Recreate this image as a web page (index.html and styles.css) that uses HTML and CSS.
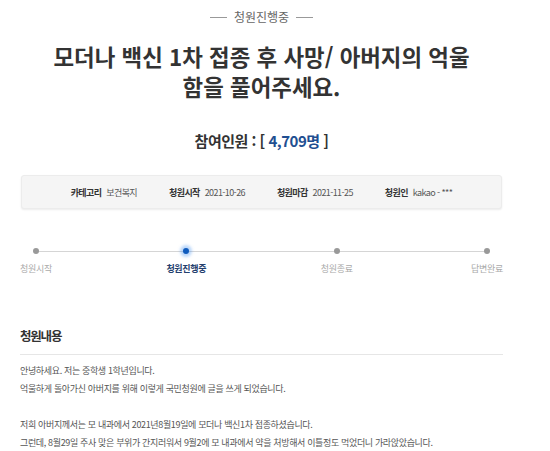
FILE: index.html
```html
<!DOCTYPE html>
<html lang="ko">
  <head>
    <meta charset="UTF-8" />
    <meta name="viewport" content="width=device-width, initial-scale=1.0" />
    <title>청원진행중</title>
    <link rel="stylesheet" href="styles.css">
  </head>
  <body>
    <div class="petition">
      <div class="status"><span class="dash"></span>청원진행중<span class="dash"></span></div>

      <h1 class="title">모더나 백신 1차 접종 후 사망/ 아버지의 억울<br />함을 풀어주세요.</h1>

      <h2 class="count">참여인원 : [ <span class="num">4,709명</span> ]</h2>

      <ul class="info">
        <li><strong>카테고리</strong> 보건복지</li>
        <li><strong>청원시작</strong> 2021-10-26</li>
        <li><strong>청원마감</strong> 2021-11-25</li>
        <li><strong>청원인</strong> kakao - ***</li>
      </ul>

      <div class="progress">
        <div class="step"><span class="dot"></span><span class="label">청원시작</span></div>
        <div class="step active"><span class="dot"></span><span class="label">청원진행중</span></div>
        <div class="step"><span class="dot"></span><span class="label">청원종료</span></div>
        <div class="step"><span class="dot"></span><span class="label">답변완료</span></div>
      </div>

      <div class="content">
        <h3>청원내용</h3>
        <p>
          안녕하세요. 저는 중학생 1학년입니다.<br />
          억울하게 돌아가신 아버지를 위해 이렇게 국민청원에 글을 쓰게 되었습니다.<br />
          <br />
          저희 아버지께서는 모 내과에서 2021년8월19일에 모더나 백신1차 접종하셨습니다.<br />
          그런데, 8월29일 주사 맞은 부위가 간지러워서 9월2에 모 내과에서 약을 처방해서 이틀정도 먹었더니 가라앉았습니다.
        </p>
      </div>
    </div>
  </body>
</html>
```

FILE: styles.css
```css
html,
body {
  margin: 0;
  padding: 0;
  background: #fff;
  font-family: "Noto Sans CJK KR", "Noto Sans", sans-serif;
  color: #333;
  overflow: hidden;
}

.petition {
  width: 483px;
  margin-left: 20px;
}

.status {
  display: flex;
  align-items: center;
  justify-content: center;
  gap: 7px;
  padding-top: 7px;
  line-height: 20px;
  font-size: 12px;
  color: #666;
}

.dash {
  width: 17px;
  height: 1px;
  background: #999;
}

.title {
  margin: 14px 0 0;
  font-size: 22.4px;
  line-height: 30px;
  font-weight: bold;
  text-align: center;
  color: #333;
}

.count {
  margin: 28px 0 0;
  font-size: 15px;
  line-height: 24px;
  letter-spacing: -0.5px;
  font-weight: bold;
  text-align: center;
}

.count .num {
  color: #1f4f91;
}

.info {
  list-style: none;
  display: flex;
  justify-content: center;
  gap: 32px;
  margin: 22px 1px 0;
  padding: 0;
  height: 34px;
  align-items: center;
  background: #f5f5f5;
  border: 1px solid #ececec;
  border-radius: 3px;
  box-shadow: 0 1px 2px rgba(0, 0, 0, 0.08);
  box-sizing: border-box;
  font-size: 9px;
  letter-spacing: -0.6px;
  color: #555;
}

.info strong {
  color: #333;
  margin-right: 3px;
}

.progress {
  position: relative;
  display: flex;
  justify-content: space-between;
  margin-top: 39px;
}

.progress::before {
  content: "";
  position: absolute;
  left: 16px;
  right: 16px;
  top: 3px;
  height: 1px;
  background: #d5d5d5;
}

.step {
  width: 32px;
  display: flex;
  flex-direction: column;
  align-items: center;
  position: relative;
}

.dot {
  width: 6px;
  height: 6px;
  border-radius: 50%;
  background: #999;
}

.label {
  margin-top: 8px;
  white-space: nowrap;
  font-size: 9px;
  letter-spacing: -0.3px;
  line-height: 14px;
  color: #aaa;
}

.step.active .dot {
  background: #0f5bbd;
  box-shadow: 0 0 3px 3px rgba(60, 140, 240, 0.35);
}

.step.active .label {
  color: #24406e;
  font-weight: bold;
}

.content {
  margin-top: 48px;
}

.content h3 {
  margin: 0;
  padding-bottom: 6px;
  font-size: 12.5px;
  letter-spacing: -1.2px;
  line-height: 24px;
  font-weight: bold;
  border-bottom: 1px solid #e6e6e6;
}

.content p {
  margin: 7px 0 0;
  font-size: 9px;
  letter-spacing: -0.35px;
  line-height: 18px;
  color: #555;
}
```
